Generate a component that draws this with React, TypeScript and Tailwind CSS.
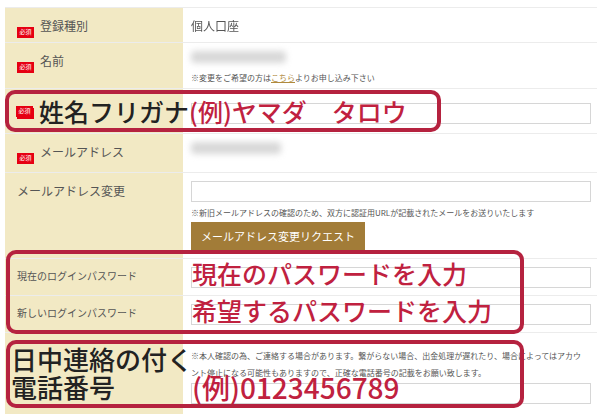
import React from "react";

const F = { fontFamily: '"Noto Sans CJK JP", "Noto Sans", sans-serif' };

function Req() {
  return <span className="inline-flex items-center justify-center w-[17px] h-[11px] bg-[#e60012] text-white text-[6px] leading-none mr-[6px]">必須</span>;
}
function Blur({ w }: { w: number }) {
  return <div className="h-[12px] bg-[#d8d8d8] blur-[3px] rounded" style={{ width: w }} />;
}
function Input() {
  return <div className="h-[21px] w-[400px] border border-[#d6d6d6] bg-white" />;
}
function Row({ h, label, children, req }: { h: string; label: React.ReactNode; children?: React.ReactNode; req?: boolean }) {
  return (
    <div className={`flex border-b border-[#ececec] ${h}`}>
      <div className="w-[178px] shrink-0 bg-[#f2e9c4] px-[12px] pt-[9px] flex items-start text-[12px] text-[#555]">
        {req && <span className="mt-[3px]"><Req /></span>}
        {label}
      </div>
      <div className="flex-1 px-[8px] pt-[8px] text-[11px] text-[#444]">{children}</div>
    </div>
  );
}

export default function App() {
  return (
    <div className="relative w-[600px] h-[414px] bg-white overflow-hidden" style={F}>
      <div className="ml-[5px] mr-[3px] mt-[7px] border-t border-[#ececec]">
        <Row h="h-[35px]" label="登録種別" req>
          <div className="pt-[1px] text-[12px] text-[#555] blur-[0.3px]">個人口座</div>
        </Row>
        <Row h="h-[46px]" label="名前" req>
          <Blur w={95} />
          <div className="mt-[9px] text-[8px] text-[#555]">※変更をご希望の方は<span className="text-[#b08a3e] underline">こちら</span>よりお申し込み下さい</div>
        </Row>
        <Row h="h-[45px]" label="" req>
          <div className="mt-[6px]"><Input /></div>
        </Row>
        <Row h="h-[39px]" label="メールアドレス" req>
          <Blur w={90} />
        </Row>
        <Row h="h-[86px]" label="メールアドレス変更">
          <Input />
          <div className="mt-[5px] text-[8px] text-[#555]">※新旧メールアドレスの確認のため、双方に認証用URLが記載されたメールをお送りいたします</div>
          <div className="mt-[3px] w-[174px] h-[28px] bg-[#a27c38] text-white text-[11px] flex items-center justify-center">メールアドレス変更リクエスト</div>
        </Row>
        <Row h="h-[37px]" label={<span className="text-[10px]">現在のログインパスワード</span>}>
          <Input />
        </Row>
        <Row h="h-[37px]" label={<span className="text-[10px]">新しいログインパスワード</span>}>
          <Input />
        </Row>
        <Row h="h-[90px]" label="">
          <div className="w-[396px] text-[8px] leading-[17px] text-[#555] mt-[6px]">※本人確認の為、ご連絡する場合があります。繋がらない場合、出金処理が遅れたり、場合によってはアカウント停止になる可能性もありますので、正確な電話番号の記載をお願い致します。</div>
          <div className="mt-[2px]"><Input /></div>
        </Row>
      </div>

      <div className="absolute left-[5px] top-[90px] w-[436px] h-[42px] border-[4px] border-[#b5223f] rounded-[10px] flex items-center pl-[7px]">
        <Req />
        <span className="text-[25px] font-medium text-[#222] leading-none">姓名フリガナ</span>
        <span className="text-[25px] font-medium text-[#c0213f] leading-none">(例)ヤマダ　タロウ</span>
      </div>
      <div className="absolute left-[6px] top-[250px] w-[518px] h-[84px] border-[4px] border-[#b5223f] rounded-[10px]">
        <div className="absolute left-[182px] top-[1px] text-[25px] font-medium text-[#c0213f] leading-[36px]">現在のパスワードを入力</div>
        <div className="absolute left-[182px] top-[38px] text-[25px] font-medium text-[#c0213f] leading-[36px]">希望するパスワードを入力</div>
      </div>
      <div className="absolute left-[6px] top-[340px] w-[518px] h-[68px] border-[4px] border-[#b5223f] rounded-[10px]">
        <div className="absolute left-[1px] top-[1px] text-[26px] font-medium text-[#222] leading-[28px]">日中連絡の付く<br />電話番号</div>
        <div className="absolute left-[182px] top-[26px] text-[28px] font-medium text-[#c0213f] leading-[34px]">(例)0123456789</div>
      </div>
    </div>
  );
}
